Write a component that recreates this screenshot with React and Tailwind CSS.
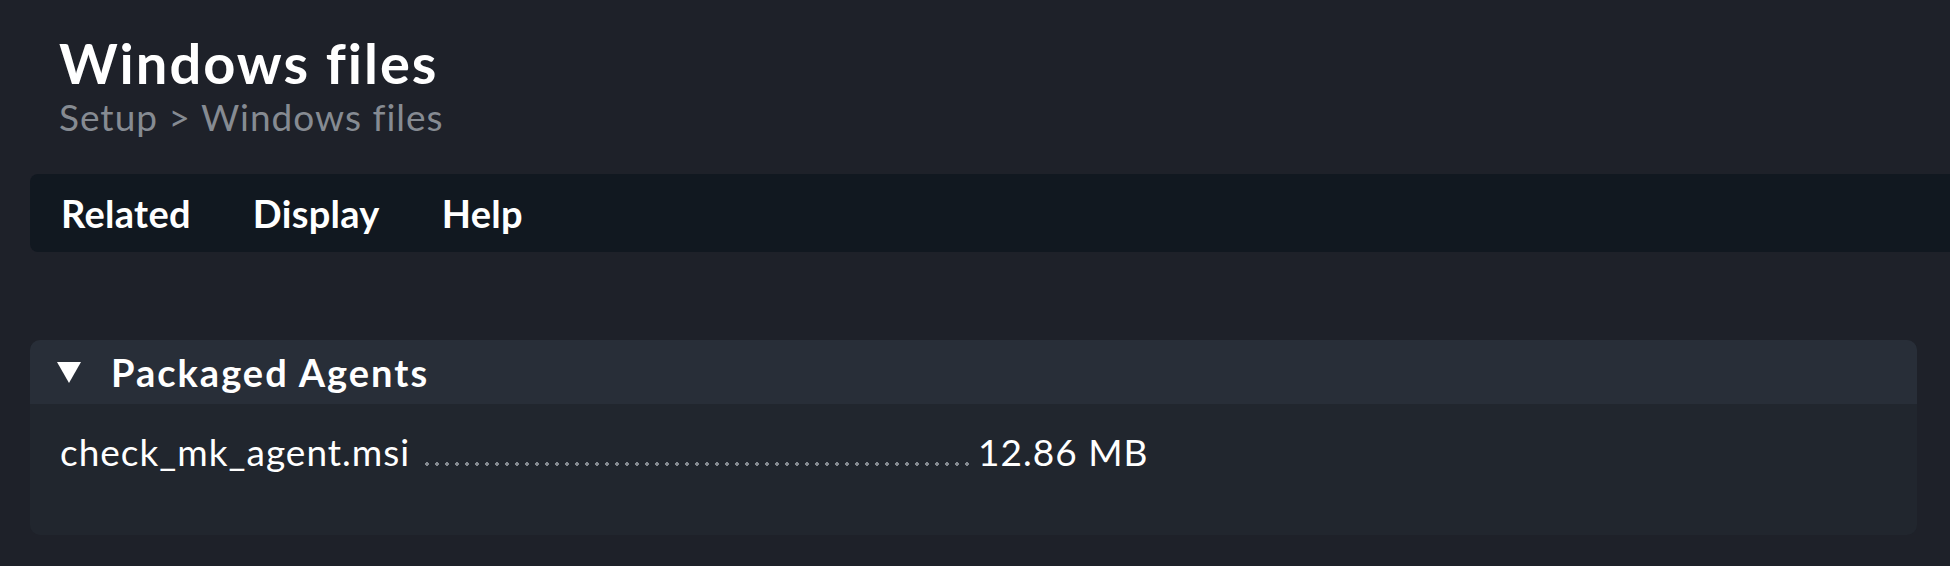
import React from 'react'

const font = { fontFamily: 'Lato, "Noto Sans", sans-serif' }

function MenuBar() {
  const items = ['Related', 'Display', 'Help']
  return (
    <div className="ml-[30px] mt-[35px] h-[78px] rounded-l-[8px] bg-[#111820] flex items-center gap-[62px] pl-[31px]">
      {items.map((item) => (
        <span key={item} className="text-[38px] font-bold text-white leading-none tracking-[0.3px]">
          {item}
        </span>
      ))}
    </div>
  )
}

function AgentRow({ name, size }) {
  return (
    <div className="flex items-baseline text-[37px] text-white leading-none tracking-[1px]">
      <span className="whitespace-nowrap">{name}</span>
      {/* dotted leader */}
      <span className="ml-[12px] w-[547px] h-[4px] shrink-0 bg-[radial-gradient(circle,#858a91_1.6px,transparent_2.1px)] bg-[length:10px_4px] bg-repeat-x" />
      <span className="ml-[9px] whitespace-nowrap">{size}</span>
    </div>
  )
}

export default function App() {
  return (
    <div className="w-[1950px] h-[566px] overflow-hidden bg-[#1e2129]" style={font}>
      {/* Title + breadcrumb */}
      <div className="pl-[59px] pt-[33px]">
        <h1 className="text-[56px] font-bold text-white leading-[60px] tracking-[2px]">
          Windows files
        </h1>
        <div className="mt-[2px] text-[37px] text-[#868b92] leading-[44px] tracking-[1px]">
          Setup &gt; Windows files
        </div>
      </div>

      <MenuBar />

      {/* Packaged Agents panel */}
      <div className="ml-[30px] mr-[33px] mt-[88px] rounded-[10px] overflow-hidden bg-[#21262e]">
        <div className="h-[64px] bg-[#282e38] flex items-center pl-[27px]">
          <svg width="24" height="21" viewBox="0 0 24 21" className="shrink-0">
            <polygon points="0,0 24,0 12,21" fill="#ffffff" />
          </svg>
          <span className="ml-[30px] text-[38px] font-bold text-white leading-none tracking-[2px]">
            Packaged Agents
          </span>
        </div>
        <div className="h-[131px] pl-[30px] pt-[29px]">
          <AgentRow name="check_mk_agent.msi" size="12.86 MB" />
        </div>
      </div>
    </div>
  )
}
